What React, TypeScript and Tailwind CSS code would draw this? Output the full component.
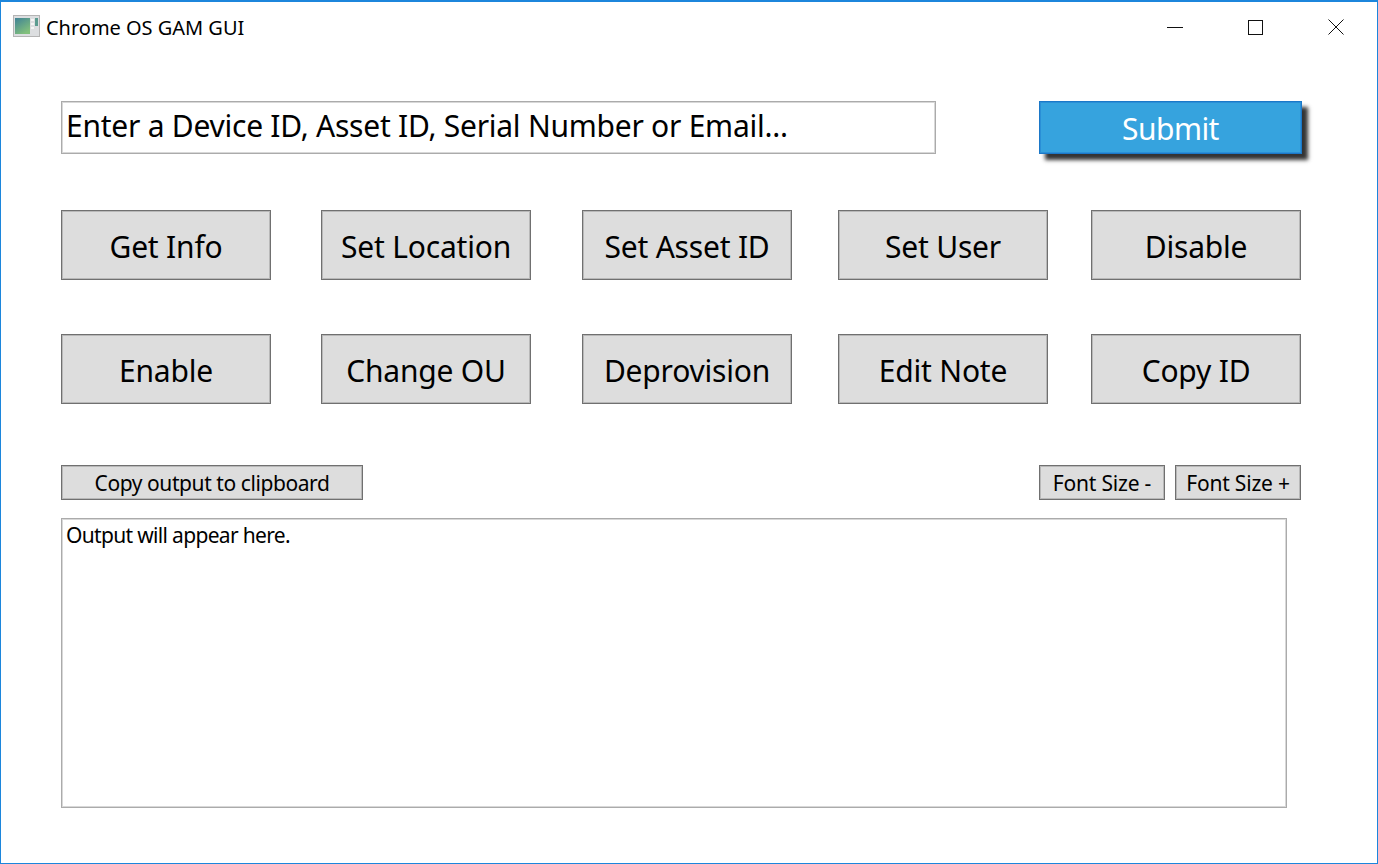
const rowA = [
  { label: "Get Info", ml: "ml-0" },
  { label: "Set Location", ml: "ml-[50px]" },
  { label: "Set Asset ID", ml: "ml-[51px]" },
  { label: "Set User", ml: "ml-[46px]" },
  { label: "Disable", ml: "ml-[43px]" },
];
const rowB = [
  { label: "Enable", ml: "ml-0" },
  { label: "Change OU", ml: "ml-[50px]" },
  { label: "Deprovision", ml: "ml-[51px]" },
  { label: "Edit Note", ml: "ml-[46px]" },
  { label: "Copy ID", ml: "ml-[43px]" },
];

function BigButton({ label, ml }: { label: string; ml: string }) {
  return (
    <div className={`${ml} w-[210px] h-[70px] flex items-center justify-center bg-[#dddddd] border border-[#707070] shadow-[inset_0_0_0_1px_#b8b8b8] text-[30px] text-black tracking-[-0.2px] pt-[3px]`}>
      {label}
    </div>
  );
}

function SmallButton({ label, className }: { label: string; className: string }) {
  return (
    <div className={`${className} h-[35px] flex items-center justify-center bg-[#dddddd] border border-[#707070] shadow-[inset_0_0_0_1px_#b8b8b8] text-[21px] text-black pt-[2px]`}>
      {label}
    </div>
  );
}

export default function App() {
  return (
    <div className="w-[1378px] h-[864px] bg-white border border-t-2 border-[#1c86dc] flex flex-col overflow-hidden font-['Noto_Sans','Open_Sans',sans-serif]">
      <div className="h-[52px] flex items-start shrink-0">
        <svg width="27" height="22" viewBox="0 0 27 22" className="ml-[12px] mt-[13px]">
          <defs>
            <linearGradient id="g" x1="0" y1="0" x2="0.6" y2="1">
              <stop offset="0" stopColor="#3f8296" />
              <stop offset="1" stopColor="#82c07c" />
            </linearGradient>
          </defs>
          <rect x="0.5" y="0.5" width="26" height="21" fill="#dcdee0" stroke="#b4b4b4" />
          <rect x="2" y="3" width="15" height="16" fill="url(#g)" />
          <rect x="18" y="4" width="3" height="2" fill="#f5f5f5" />
          <rect x="18" y="8" width="3" height="2" fill="#f5f5f5" />
          <rect x="18" y="12" width="3" height="2" fill="#f5f5f5" />
          <rect x="22" y="3" width="3" height="8" fill="#5c9c90" />
        </svg>
        <div className="ml-[6px] mt-[12px] text-[20px] leading-[28px] text-black tracking-[-0.02px]">Chrome OS GAM GUI</div>
        <div className="ml-auto flex items-center mt-[17px] mr-[33px]">
          <svg width="16" height="16" viewBox="0 0 16 16" className="mr-[65px]">
            <path d="M0 8.5H16" stroke="#111" strokeWidth="1" />
          </svg>
          <svg width="15" height="15" viewBox="0 0 15 15" className="mr-[65px]">
            <rect x="0.5" y="0.5" width="14" height="14" fill="none" stroke="#111" strokeWidth="1" />
          </svg>
          <svg width="16" height="16" viewBox="0 0 16 16">
            <path d="M0.5 0.5L15.5 15.5M15.5 0.5L0.5 15.5" stroke="#111" strokeWidth="1" />
          </svg>
        </div>
      </div>

      <div className="pl-[60px] flex flex-col">
        <div className="mt-[47px] flex items-start">
          <div className="w-[875px] h-[53px] border border-[#ababab] shadow-[inset_0_0_0_1px_#d8d8d8] bg-white flex items-center pl-[4px] pb-[5px] text-[30px] text-black tracking-[-0.25px]">
            Enter a Device ID, Asset ID, Serial Number or Email...
          </div>
          <div className="ml-[103px] w-[263px] h-[53px] bg-[#36a3de] border border-[#1b78c8] flex items-center justify-center text-[30px] text-white tracking-[-0.55px] pt-[1px] shadow-[6px_6px_4px_rgba(0,0,0,0.8),inset_0_0_0_1px_#2a8fd6]">
            Submit
          </div>
        </div>

        <div className="mt-[56px] flex">
          {rowA.map((b) => (
            <BigButton key={b.label} label={b.label} ml={b.ml} />
          ))}
        </div>
        <div className="mt-[54px] flex">
          {rowB.map((b) => (
            <BigButton key={b.label} label={b.label} ml={b.ml} />
          ))}
        </div>

        <div className="mt-[61px] flex">
          <SmallButton label="Copy output to clipboard" className="w-[302px] tracking-[-0.42px]" />
          <SmallButton label="Font Size -" className="ml-[676px] w-[126px] tracking-[-0.2px]" />
          <SmallButton label="Font Size +" className="ml-[10px] w-[126px] tracking-[-0.2px]" />
        </div>

        <div className="mt-[18px] w-[1226px] h-[290px] border border-[#ababab] shadow-[inset_0_0_0_1px_#d8d8d8] bg-white pl-[4px] pt-[1px] text-[21px] leading-[31px] text-black tracking-[-0.67px]">
          Output will appear here.
        </div>
      </div>
    </div>
  );
}
